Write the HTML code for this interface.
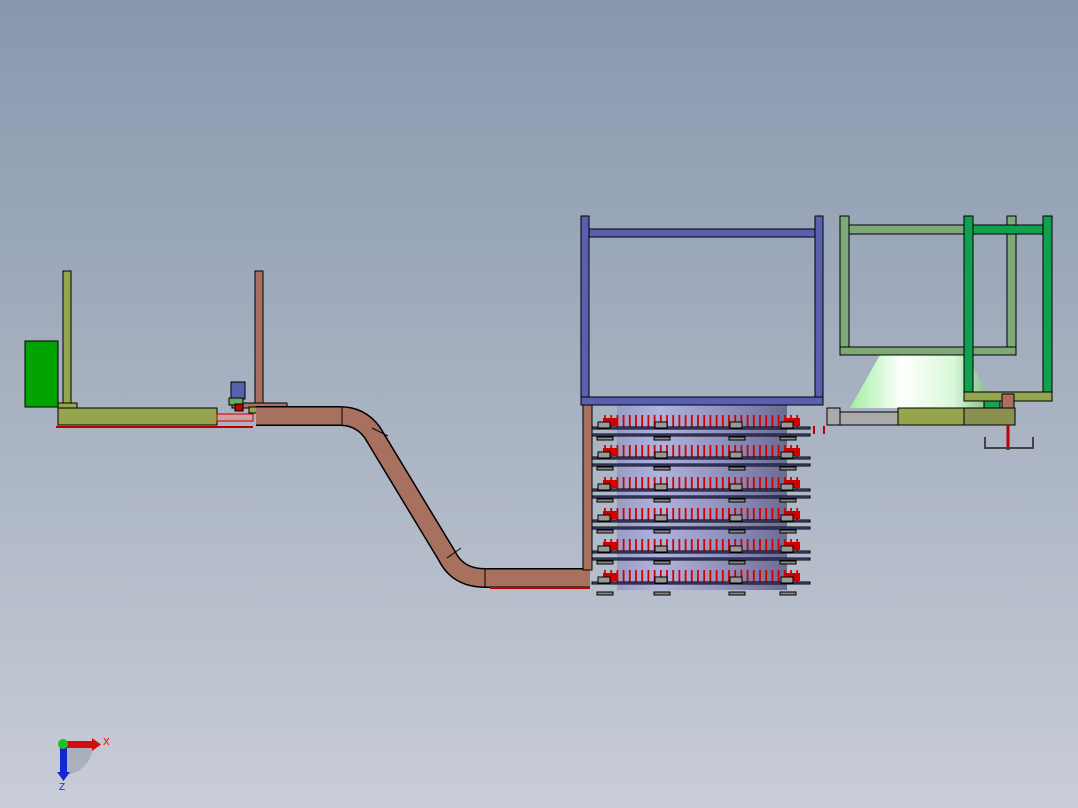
<!DOCTYPE html>
<html><head><meta charset="utf-8"><style>
html,body{margin:0;padding:0;width:1078px;height:808px;overflow:hidden}
body{background:linear-gradient(#8798ae 0%,#a4afbf 45%,#c9cdd7 100%)}
svg{position:absolute;left:0;top:0}
</style></head><body>
<svg id="s" width="1078" height="808" viewBox="0 0 1078 808" stroke="#000" stroke-width="1">
<defs>
<linearGradient id="cyl" x1="0" x2="1"><stop offset="0" stop-color="#9a9cc8"/><stop offset="0.25" stop-color="#b0b3de"/><stop offset="0.75" stop-color="#8585b0"/><stop offset="1" stop-color="#6a6a92"/></linearGradient>
<linearGradient id="cone" x1="0" x2="1"><stop offset="0" stop-color="#a0f0a0"/><stop offset="0.35" stop-color="#ffffff"/><stop offset="0.7" stop-color="#d8f8d8"/><stop offset="1" stop-color="#70a878"/></linearGradient>
</defs>
<!-- left -->
<rect x="25" y="341" width="33" height="66" fill="#00a300"/>
<rect x="63" y="271" width="8" height="133" fill="#94a54e"/>
<rect x="58" y="403" width="19" height="5" fill="#94a54e"/>
<line x1="56" y1="427" x2="253" y2="427" stroke="#c00000" stroke-width="2"/>
<rect x="58" y="408" width="159" height="17" fill="#94a54e"/>
<rect x="217" y="414" width="36" height="7" fill="#d0a0a0" stroke="#c00000"/>
<rect x="255" y="271" width="8" height="133" fill="#a8705e"/>
<rect x="232" y="403" width="55" height="5" fill="#a8705e"/>
<rect x="231" y="382" width="14" height="17" fill="#5a5fb0"/>
<rect x="229" y="398" width="14" height="7" fill="#60b060"/>
<rect x="235" y="404" width="8" height="7" fill="#c00000"/>
<rect x="249" y="407" width="9" height="6" fill="#94a54e"/>
<!-- conveyor -->
<path d="M256 416 L340 416 Q360 416 372 432 L447 556 Q458 578 485 578 L590 578" fill="none" stroke="#000" stroke-width="20"/>
<path d="M256 416 L340 416 Q360 416 372 432 L447 556 Q458 578 485 578 L590 578" fill="none" stroke="#a8705e" stroke-width="17"/>
<line x1="342" y1="407" x2="342" y2="425"/><line x1="372" y1="428" x2="388" y2="436"/><line x1="447" y1="558" x2="461" y2="548"/><line x1="485" y1="569" x2="485" y2="587"/>
<line x1="490" y1="588" x2="590" y2="588" stroke="#c00000" stroke-width="2"/>
<!-- cylinder -->
<rect x="617" y="405" width="170" height="185" fill="url(#cyl)" stroke="none"/>
<rect x="583" y="405" width="9" height="165" fill="#a8705e"/>
<g id="rails"></g>
<!-- blue frame -->
<rect x="581" y="216" width="8" height="181" fill="#5a5fb0"/>
<rect x="815" y="216" width="8" height="181" fill="#5a5fb0"/>
<rect x="589" y="229" width="226" height="8" fill="#5a5fb0"/>
<rect x="581" y="397" width="242" height="8" fill="#5a5fb0"/>
<!-- right -->
<path d="M880 355 L965 355 L998 408 L850 408 Z" fill="url(#cone)" stroke="none"/>
<rect x="840" y="216" width="9" height="131" fill="#7ea878"/>
<rect x="1007" y="216" width="9" height="131" fill="#7ea878"/>
<rect x="849" y="225" width="158" height="9" fill="#7ea878"/>
<rect x="840" y="347" width="176" height="8" fill="#7ea878"/>
<rect x="827" y="408" width="13" height="17" fill="#aaa"/>
<rect x="840" y="412" width="58" height="13" fill="#aaa"/>
<rect x="898" y="408" width="66" height="17" fill="#94a54e"/>
<rect x="964" y="408" width="51" height="17" fill="#8a9050"/>
<rect x="984" y="401" width="16" height="7" fill="#10a850"/>
<rect x="964" y="216" width="9" height="176" fill="#10a050"/>
<rect x="1043" y="216" width="9" height="176" fill="#10a050"/>
<rect x="973" y="225" width="70" height="9" fill="#10a050"/>
<rect x="964" y="392" width="88" height="9" fill="#94a54e"/>
<rect x="1002" y="394" width="12" height="14" fill="#a8705e"/>
<line x1="1008" y1="425" x2="1008" y2="450" stroke="#c00000" stroke-width="3"/>
<path d="M985 437 V448 H1033 V437" fill="none" stroke="#444" stroke-width="2"/>
<line x1="814" y1="426" x2="814" y2="434" stroke="#c00000" stroke-width="2"/><line x1="824" y1="426" x2="824" y2="434" stroke="#c00000" stroke-width="2"/>
<!-- triad -->
<path d="M63 745 L63 775 A30 30 0 0 0 93 745 Z" fill="#9aa0aa" stroke="none" opacity="0.6"/>
<rect x="63" y="741" width="30" height="7" fill="#d01010" stroke="none"/><path d="M92 738 L101 744.5 L92 751 Z" fill="#d01010" stroke="none"/>
<rect x="60" y="745" width="7" height="28" fill="#1028d0" stroke="none"/><path d="M57 772 L63.5 781 L70 772 Z" fill="#1028d0" stroke="none"/>
<circle cx="63" cy="744" r="5" fill="#20c020" stroke="none"/>
<text x="103" y="745" font-family="Liberation Sans,sans-serif" font-size="10" fill="#e00000" stroke="none">X</text>
<text x="59" y="790" font-family="Liberation Sans,sans-serif" font-size="10" fill="#1028d0" stroke="none">Z</text>
</svg>
<script>
var g=document.getElementById('rails'),h='';
var ys=[425,455,487,518,549,580];
ys.forEach(function(y){
 for(var x=605;x<800;x+=6.2){h+='<line x1="'+x.toFixed(1)+'" y1="'+(y-10)+'" x2="'+x.toFixed(1)+'" y2="'+(y+2)+'" stroke="#d00000" stroke-width="1.8"/>';}
 h+='<rect x="603" y="'+(y-7)+'" width="15" height="8" fill="#d00000" stroke="none"/><rect x="785" y="'+(y-7)+'" width="15" height="8" fill="#d00000" stroke="none"/>';
 h+='<rect x="592" y="'+(y+2)+'" width="218" height="2" fill="#5a5fb0"/>';
 if(y<580)h+='<rect x="592" y="'+(y+9)+'" width="218" height="2" fill="#5a5fb0"/>';
 [598,655,730,781].forEach(function(b){h+='<rect x="'+b+'" y="'+(y-3)+'" width="12" height="6" fill="#999" /><rect x="'+(b-1)+'" y="'+(y+12)+'" width="16" height="3" fill="#888"/>';});
});
g.innerHTML=h;
</script>
</body></html>
